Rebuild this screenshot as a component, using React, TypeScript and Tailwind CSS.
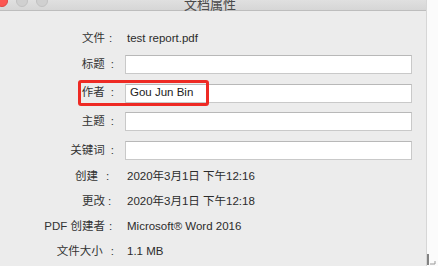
import React from 'react';

const font = { fontFamily: '"Liberation Sans", "Noto Sans CJK SC", sans-serif' };

// label text ends at x=105, colon sits a few px right of it
function Label({ text, colon = 'ml-[5px]' }: { text: string; colon?: string }) {
  return (
    <div className="w-[114px] shrink-0 flex items-center text-[11.5px] text-[#333]">
      <span className="w-[105px] text-right whitespace-nowrap">{text}</span>
      <span className={colon}>:</span>
    </div>
  );
}

function InputRow({ label, value, highlight }: { label: string; value?: string; highlight?: boolean }) {
  return (
    <div className="relative flex items-center h-[28.7px]">
      <Label text={label} colon="ml-[6px]" />
      <div className="ml-[11px] w-[287px] h-[19px] bg-white border border-[#c9c9c9] border-t-[#b8b8b8] flex items-center pl-[4px] text-[11.5px] text-[#222]">
        {value}
      </div>
      {highlight && (
        <div className="absolute left-[78px] top-[1px] w-[131px] h-[26px] border-[3px] border-[#ee2a24] rounded-[3px]" />
      )}
    </div>
  );
}

function TextRow({ label, value, h = 'h-[24.7px]', colon }: { label: string; value: string; h?: string; colon?: string }) {
  return (
    <div className={`flex items-center ${h}`}>
      <Label text={label} colon={colon} />
      <div className="ml-[13px] text-[11.5px] text-[#2b2b2b] whitespace-nowrap">{value}</div>
    </div>
  );
}

export default function App() {
  return (
    <div className="w-[438px] h-[266px] flex overflow-hidden bg-white" style={font}>
      <div className="w-[427px] h-full bg-[#ececec] flex flex-col border-r border-[#d6d6d6]">
        {/* title bar, top half cut off */}
        <div className="relative -mt-[11px] h-[22px] shrink-0 bg-gradient-to-b from-[#ebebeb] to-[#d6d6d6] border-b border-[#bdbdbd] flex items-center">
          <div className="flex items-center gap-[8px] -ml-[4px] mt-[2px]">
            <span className="w-[12px] h-[12px] rounded-full bg-[#fc5753] border border-[#df4744]" />
            <span className="w-[12px] h-[12px] rounded-full bg-[#d0d0d0] border border-[#c2c2c2]" />
            <span className="w-[12px] h-[12px] rounded-full bg-[#d0d0d0] border border-[#c2c2c2]" />
          </div>
          <div className="absolute inset-x-0 top-[6px] pr-[6px] text-center text-[13px] text-[#4a4a4a]">文档属性</div>
        </div>

        <div className="flex flex-col pt-[17px]">
          <TextRow label="文件" value="test report.pdf" h="h-[22px]" colon="ml-[4px]" />
          <InputRow label="标题" />
          <InputRow label="作者" value="Gou Jun Bin" highlight />
          <InputRow label="主题" />
          <InputRow label="关键词" />
          <div className="flex items-center h-[24.7px]">
            <div className="w-[114px] shrink-0 flex items-center text-[11.5px] text-[#333]">
              <span className="w-[98px] text-right">创建</span>
              <span className="ml-[8px]">:</span>
            </div>
            <div className="ml-[13px] text-[11.5px] text-[#2b2b2b] whitespace-nowrap">2020年3月1日 下午12:16</div>
          </div>
          <TextRow label="更改" value="2020年3月1日 下午12:18" colon="ml-[3px]" />
          <TextRow label="PDF 创建者" value="Microsoft® Word 2016" colon="ml-[4px]" />
          <div className="flex items-center h-[24.7px]">
            <div className="w-[114px] shrink-0 flex items-center text-[11.5px] text-[#333]">
              <span className="w-[103px] text-right">文件大小</span>
              <span className="ml-[8px]">:</span>
            </div>
            <div className="ml-[13px] text-[11.5px] text-[#2b2b2b] whitespace-nowrap">1.1 MB</div>
          </div>
        </div>
      </div>
      <div className="flex-1 bg-[#fbfbfb] flex flex-col justify-end">
        <svg width="10" height="12" viewBox="0 0 10 12">
          <path d="M1 0 V11" stroke="#333" strokeWidth="1.2" />
          <path d="M3 10 H8 V7" stroke="#999" strokeWidth="1" fill="none" />
        </svg>
      </div>
    </div>
  );
}
